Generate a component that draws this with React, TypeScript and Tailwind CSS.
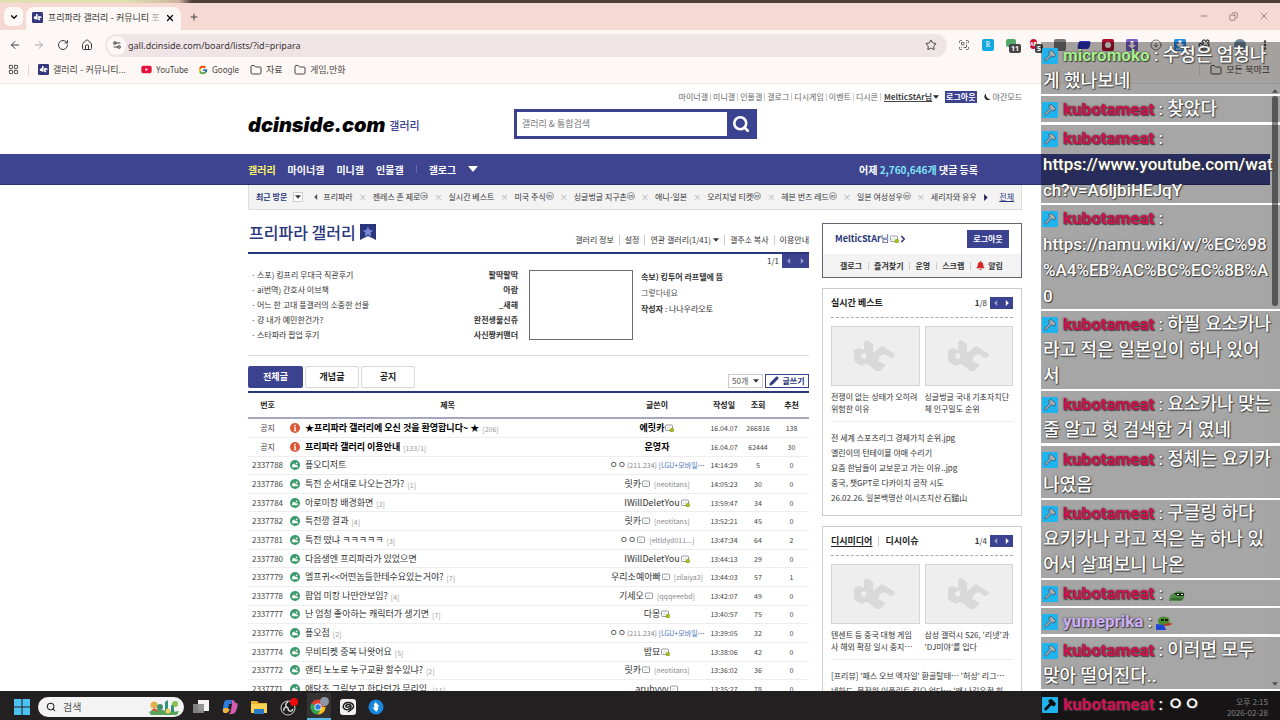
import React from 'react';
import {
  ArrowLeft,
  ArrowRight,
  ChevronDown,
  ChevronRight,
  CircleArrowDown,
  Copy,
  EllipsisVertical,
  Folder,
  House,
  LayoutGrid,
  Minus,
  Pencil,
  Plus,
  Puzzle,
  RotateCw,
  ScanQrCode,
  Search,
  Settings2,
  Star,
  X,
} from 'lucide-react';
import { FcGoogle } from 'react-icons/fc';
import { FaBell, FaYoutube } from 'react-icons/fa';

type Post = {
  id: string;
  title: string;
  replies?: string;
  writer: string;
  uid?: string;
  ip?: boolean;
  badge?: 'fixed' | 'semi';
  date: string;
  views: string;
  likes: string;
  notice?: boolean;
};

const posts: Post[] = [
  { id: '공지', title: '★프리파라 갤러리에 오신 것을 환영합니다~ ★', replies: '206', writer: '에릿카', badge: 'fixed', date: '16.04.07', views: '266816', likes: '138', notice: true },
  { id: '공지', title: '프리파라 갤러리 이용안내', replies: '133/1', writer: '운영자', date: '16.04.07', views: '62444', likes: '30', notice: true },
  { id: '2337788', title: '픞오디저트', writer: 'ㅇㅇ', ip: true, date: '14:14:29', views: '5', likes: '0' },
  { id: '2337786', title: '특전 순서대로 나오는건가?', replies: '1', writer: '릿카', uid: 'neotitans', badge: 'semi', date: '14:05:23', views: '30', likes: '0' },
  { id: '2337784', title: '아로미캉 배경화면', replies: '2', writer: 'IWillDeletYou', badge: 'fixed', date: '13:59:47', views: '34', likes: '0' },
  { id: '2337782', title: '특전깡 결과', replies: '4', writer: '릿카', uid: 'neotitans', badge: 'semi', date: '13:52:21', views: '45', likes: '0' },
  { id: '2337781', title: '특전 떴냐 ㅋㅋㅋㅋㅋ', replies: '3', writer: 'ㅇㅇ', uid: 'eltldyd011...', badge: 'semi', date: '13:47:34', views: '64', likes: '2' },
  { id: '2337780', title: '다음생엔 프리파라가 있었으면', writer: 'IWillDeletYou', badge: 'fixed', date: '13:44:13', views: '29', likes: '0' },
  { id: '2337779', title: '엘프귀<<어떤놈들한테수요있는거야?', replies: '7', writer: '우리소예아빠', uid: 'zilaiya3', badge: 'semi', date: '13:44:03', views: '57', likes: '1' },
  { id: '2337778', title: '팝업 미캉 나만안보임?', replies: '4', writer: '기세오', uid: 'qqqeeebd', badge: 'semi', date: '13:42:07', views: '49', likes: '0' },
  { id: '2337777', title: '난 엄청 좋아하는 캐릭터가 생기면', replies: '7', writer: '다몽', badge: 'fixed', date: '13:40:57', views: '75', likes: '0' },
  { id: '2337776', title: '픞오점', replies: '2', writer: 'ㅇㅇ', ip: true, date: '13:39:05', views: '32', likes: '0' },
  { id: '2337774', title: '무비티켓 중복 나왓어요', replies: '5', writer: '밤묘', badge: 'fixed', date: '13:38:06', views: '42', likes: '0' },
  { id: '2337772', title: '랜티 노노로 누구교환 할수있냐?', replies: '2', writer: '릿카', uid: 'neotitans', badge: 'semi', date: '13:36:02', views: '36', likes: '0' },
  { id: '2337771', title: '애당초 그림보고 한다던가 무리임.', replies: '11', writer: 'aruhyyy', badge: 'semi', date: '13:35:27', views: '78', likes: '0' },
];

const recent = [
  { name: '프리파라' },
  { name: '젠레스 존 제로', minor: true },
  { name: '실시간 베스트' },
  { name: '미국 주식', minor: true },
  { name: '싱글벙글 지구촌', minor: true },
  { name: '애니-일본' },
  { name: '오리지널 티켓', minor: true },
  { name: '헤븐 번즈 레드', minor: true },
  { name: '일본 여성성우', minor: true },
  { name: '세리자와 유우' },
];

const hotPosts = [
  ['스포) 킹프리 무대극 직관후기', '팔딱팔딱'],
  ['ai번역) 간호사 이브책', '아람'],
  ['어느 한 고대 픞갤러의 소중한 선물', '_새해'],
  ['걍 내가 예민한건가?', '완전생물신쥬'],
  ['스타파라 팝업 후기', '사신짱커맨더'],
];

type Chat = { user: string; color: string; lines: React.ReactNode[] };

const RED = 'text-[#cf1150]';

const chats: Chat[] = [
  { user: 'micromoko', color: 'text-[#a5f08a]', lines: ['수정은 엄청나', '게 했나보네'] },
  { user: 'kubotameat', color: RED, lines: ['찾았다'] },
  { user: 'kubotameat', color: RED, lines: ['', 'https://www.youtube.com/wat', 'ch?v=A6ljbiHEJqY'] },
  { user: 'kubotameat', color: RED, lines: ['', 'https://namu.wiki/w/%EC%98', '%A4%EB%AC%BC%EC%8B%A', '0'] },
  { user: 'kubotameat', color: RED, lines: ['하필 요소카나', '라고 적은 일본인이 하나 있어', '서'] },
  { user: 'kubotameat', color: RED, lines: ['요소카나 맞는', '줄 알고 헛 검색한 거 였네'] },
  { user: 'kubotameat', color: RED, lines: ['정체는 요키카', '나였음'] },
  { user: 'kubotameat', color: RED, lines: ['구글링 하다', '요키카나 라고 적은 놈 하나 있', '어서 살펴보니 나온'] },
  { user: 'kubotameat', color: RED, lines: [<FrogFlat key="e" />] },
  { user: 'yumeprika', color: 'text-[#cdb0f7]', lines: [<FrogBlue key="e" />] },
  { user: 'kubotameat', color: RED, lines: ['이러면 모두', '맞아 떨어진다..'] },
  { user: 'kubotameat', color: RED, lines: ['ㅇㅇ'] },
];

function FrogFlat() {
  return (
    <svg viewBox="0 0 16 12" className="ml-0.5 inline-block h-3 w-4 align-[-3px]">
      <path d="M0 11 C0 6 3 3 6 3 C8 0 14 1 15 4 C16 7 14 11 12 11Z" fill="#4d8b45" />
      <path d="M5 3h10v3H9L7 5Z" fill="#16251a" />
      <path d="M8 4h2v1H8zM12 4h2v1h-2z" fill="#dfe9dc" />
      <path d="M2 9h11" stroke="#274d24" strokeWidth="1" />
    </svg>
  );
}

function FrogBlue() {
  return (
    <svg viewBox="0 0 16 14" className="inline-block h-3.5 w-4 align-[-3px]">
      <path d="M2 4 C3 0 8 0 10 1 C14 1 14 5 13 8 L9 10 H3Z" fill="#4c8a2f" />
      <path d="M0 8 L8 9 L10 14 H0Z" fill="#1d45d8" />
      <path d="M5 3h3v2H5zM9 3h3v2H9z" fill="#17240f" />
      <path d="M8 8 L16 7 L15 9 L9 10Z" fill="#c62e22" />
    </svg>
  );
}

const DcFavicon = () => (
  <svg viewBox="0 0 12 12" className="size-[11px] shrink-0">
    <rect width="12" height="12" rx="1.5" fill="#35367f" />
    <path d="M2 5.2 4.4 4.4V2.3h1.7v6.2L3.4 8 2 7Z M6.6 5 8.6 4l2.2 1.6-.6 1L8.4 6v1.5l1 .6-1.2 1.3-1.6-1.2Z" fill="#fff" />
  </svg>
);

const DcPlaceholder = () => (
  <svg viewBox="0 0 42 32" className="h-8 w-[42px]">
    <path
      fill="#d9d9d9"
      fillRule="evenodd"
      d="M0 10 L5 8 L10 10 L10 2 L13 0 L19 4 L19 13 L28 6 L41 14 L40 17 L36 18 L31 14 L26 16 L24 21 L32 25 L26 31 L22 31 L15 25 L11 24 L8 26 L2 23 L0 20 Z M7 14 L8 19 L12 18 L12 13 Z"
    />
  </svg>
);

const NickBadge = ({ kind }: { kind: 'fixed' | 'semi' }) => (
  <svg viewBox="0 0 9 8" className="h-2 w-[9px] shrink-0">
    <rect x="0.5" y="1" width="7" height="5.5" rx="0.8" fill="#fff" stroke="#8f8f8f" strokeWidth="0.9" />
    <path d="M2 5 5 3" stroke="#bbb" strokeWidth="0.7" />
    {kind === 'fixed' && <rect x="5" y="4.5" width="3.6" height="3.2" rx="1" fill="#a9c410" stroke="#6f8010" strokeWidth="0.5" />}
  </svg>
);

const PostIcon = ({ notice }: { notice?: boolean }) =>
  notice ? (
    <svg viewBox="0 0 10 10" className="size-2.5 shrink-0">
      <circle cx="5" cy="5" r="5" fill="#dc5738" />
      <circle cx="5" cy="2.6" r="0.9" fill="#fff" />
      <path d="M3.9 4.2H5.8V7.4H6.4V8.2H3.8V7.4H4.4V5H3.9Z" fill="#fff" />
    </svg>
  ) : (
    <svg viewBox="0 0 10 10" className="size-2.5 shrink-0">
      <circle cx="5" cy="5" r="5" fill="#3b9a6a" />
      <path d="M2 7.2 L2.4 4.6 L4.2 3.4 L5.4 5 L7.6 5.4 L8 7.2Z" fill="#fff" />
      <circle cx="6.6" cy="3.4" r="0.9" fill="#fff" />
    </svg>
  );

const Tri = ({ dir, className }: { dir: 'left' | 'right' | 'down'; className?: string }) => {
  const d = { left: 'M7 0V10L2 5Z', right: 'M3 0V10L8 5Z', down: 'M0 2H10L5 8Z' }[dir];
  return (
    <svg viewBox="0 0 10 10" className={className}>
      <path d={d} fill="currentColor" />
    </svg>
  );
};

const Pager = ({ page, total, dim }: { page: string; total: string; dim?: boolean }) => (
  <div className="flex items-center gap-[3px] text-[8px] text-[#333]">
    <span>
      <span className={dim ? '' : 'font-bold'}>{page}</span>/{total}
    </span>
    <div className={`flex bg-[#3b4290] ${dim ? 'h-[14px] w-[27px]' : 'h-3 w-[23px]'}`}>
      <button aria-label="이전" className="flex flex-1 items-center justify-center text-[#9a9fd0]">
        <Tri dir="left" className="size-1.5" />
      </button>
      <button aria-label="다음" className={`flex flex-1 items-center justify-center ${dim ? 'text-[#9a9fd0]' : 'text-white'}`}>
        <Tri dir="right" className="size-1.5" />
      </button>
    </div>
  </div>
);

const HammerBadge = ({ dark }: { dark?: boolean }) => (
  <svg viewBox="0 0 16 16" className="mr-[5px] -ml-px inline-block size-4 align-[-3px]">
    <rect width="16" height="16" rx="1" fill="#1fb4ee" />
    <path
      d="M6.8 3.4 L9.4 2.4 L13.6 6.4 L12.4 9 L10.6 8.6 L9.2 7.9 L4 13.4 L2.4 12 L7.6 6.6Z"
      fill={dark ? '#0a0a0a' : '#a9adb0'}
      stroke={dark ? '#0a0a0a' : '#33607a'}
      strokeWidth="0.9"
    />
  </svg>
);

function BrowserChrome() {
  return (
    <div className="shrink-0 font-['Noto_Sans','Noto_Sans_CJK_KR',sans-serif]">
      <div className="h-[3px] bg-linear-to-r from-[#dfe0b0] from-10% via-[#cdb39f] via-14% to-[#4c4038] to-15%" />
      <div className="flex h-[27px] items-end bg-[#f7d9d4] pl-1">
        <button aria-label="탭 검색" className="mb-1 flex h-[19px] w-[19px] items-center justify-center rounded-md bg-[#fdf9f6]">
          <ChevronDown className="size-2.5" strokeWidth={3} />
        </button>
        <div className="ml-[3px] flex h-[23px] w-[155px] items-center rounded-t-lg bg-[#fdf8f5] pr-1.5 pb-1 pl-1.5 pt-0.5">
          <DcFavicon />
          <span className="ml-[5px] flex-1 overflow-hidden text-[9px] leading-3 whitespace-nowrap text-[#333]">
            프리파라 갤러리 - 커뮤니티 <span className="text-[#aaa]">포</span>
          </span>
          <button aria-label="탭 닫기">
            <X className="size-2.5" strokeWidth={3} />
          </button>
        </div>
        <button aria-label="새 탭" className="mb-2 ml-2">
          <Plus className="size-2.5 text-[#444]" strokeWidth={2.5} />
        </button>
        <div className="mr-2.5 mb-2 ml-auto flex items-center gap-5 text-[#7d6a68]">
          <Minus className="size-2.5" />
          <Copy className="size-[9px] -scale-x-100" />
          <X className="size-3" strokeWidth={1.5} />
        </div>
      </div>
      <div className="flex h-[30px] items-center bg-[#fdf8f5] pl-2 text-[#3c3c3c]">
        <div className="flex gap-3 pl-px">
          <ArrowLeft className="size-3" />
          <ArrowRight className="size-3 text-[#aaa]" />
          <RotateCw className="size-3" />
          <House className="size-3" />
        </div>
        <div className="ml-3 flex h-[23px] flex-1 items-center rounded-full bg-[#f0e5e6] pr-2.5 pl-0.5">
          <span className="flex size-[19px] items-center justify-center rounded-full bg-[#fdf8f5]">
            <Settings2 className="size-2.5" strokeWidth={2.5} />
          </span>
          <input
            aria-label="주소"
            defaultValue="gall.dcinside.com/board/lists/?id=pripara"
            className="ml-0.5 h-4 flex-1 bg-transparent text-[9px] text-[#3a3536] outline-none"
          />
          <Star className="size-3" />
        </div>
        <div className="flex items-center gap-3 pr-[9px] pl-[11px]">
          <ScanQrCode className="size-3 text-[#666]" />
          <span className="flex size-3 items-center justify-center rounded-xs bg-[#12a9e0] font-serif text-[8px] text-white">R</span>
          <span className="relative size-3">
            <span className="absolute top-0 left-0 h-2 w-2.5 rounded-xs bg-[#55a86a]" />
            <span className="absolute top-[5px] left-[3px] rounded-xs bg-[#444] px-0.5 text-[7px] leading-[9px] font-bold text-white">11</span>
          </span>
          <span className="relative size-3">
            <span className="absolute top-0 left-0 rounded-full bg-[#cc1030] text-[5px] leading-[10px] font-bold text-white">AB</span>
            <span className="absolute top-[5px] left-[5px] rounded-xs bg-[#444] px-0.5 text-[7px] leading-[9px] font-bold text-white">5</span>
          </span>
          <span className="size-3 rounded-xs bg-[#777]" />
          <span className="h-2 w-3 -skew-x-12 rounded-xs bg-[#3030c0]" />
          <span className="flex size-3 items-center justify-center rounded-xs bg-[#b01030]">
            <span className="size-1.5 rounded-full bg-white" />
          </span>
          <svg viewBox="0 0 12 12" className="size-3">
            <rect width="12" height="12" rx="1.5" fill="#7a5fc0" />
            <path d="M4.500 2h3v4H10L6 10 2 6h2.500Z" fill="#fff" />
          </svg>
          <CircleArrowDown className="size-3 text-[#777]" />
          <svg viewBox="0 0 12 12" className="size-3">
            <rect width="12" height="12" rx="1.5" fill="#2a8ae0" />
            <path d="M4.500 1.500h3v3.500H10L6 9 2 5h2.500ZM2 9.500h8v1H2Z" fill="#fff" />
          </svg>
          <Puzzle className="size-3" strokeWidth={2.5} />
          <span className="mr-px ml-3 size-3 rounded-full bg-[#70899c]" />
          <EllipsisVertical className="size-3" strokeWidth={3} />
        </div>
      </div>
      <div className="flex h-6 items-center border-b border-[#ece6e3] bg-[#fdf8f5] pr-2.5 pb-1 pl-2 text-[8px] text-[#4a4444]">
        <LayoutGrid className="size-[11px]" />
        <span className="mx-[9px] h-2.5 w-px bg-[#f0cdc8]" />
        <a href="#" className="flex w-[103px] items-center gap-1 text-[9px]">
          <DcFavicon />
          갤러리 - 커뮤니티...
        </a>
        <a href="#" className="flex w-[57px] items-center gap-1">
          <FaYoutube className="size-[11px] text-[#e5103c]" />
          YouTube
        </a>
        <a href="#" className="flex w-[52px] items-center gap-1">
          <FcGoogle className="size-2.5" />
          Google
        </a>
        <a href="#" className="flex w-11 items-center gap-1 text-[9px]">
          <Folder className="size-3" />
          자료
        </a>
        <a href="#" className="flex items-center gap-1 text-[9px]">
          <Folder className="size-3" />
          게임,만화
        </a>
        <a href="#" className="ml-auto flex items-center gap-1 border-l border-[#ddd] pl-2.5 text-[9px]">
          <Folder className="size-3" />
          모든 북마크
        </a>
      </div>
    </div>
  );
}

function SiteHeader() {
  const links = ['마이너갤', '미니갤', '인물갤', '갤로그', '디시게임', '이벤트', '디시콘'];
  return (
    <header>
      <div className="mx-auto max-w-[774px] pb-[15px]">
        <div className="flex h-[25px] items-center justify-end text-[8px] text-[#666]">
          {links.map((l) => (
            <a key={l} href="#" className="flex items-center whitespace-nowrap after:mx-0.5 after:h-2 after:w-px after:bg-[#ccc]">
              {l}
            </a>
          ))}
          <a href="#" className="ml-px flex items-center font-bold text-[#444]">
            <span className="underline">MelticStAr님</span>
            <Tri dir="down" className="ml-px size-1.5 text-[#222]" />
          </a>
          <button className="mx-1.5 h-3 bg-[#3b4290] px-px leading-3 font-bold text-white">로그아웃</button>
          <a href="#" className="flex items-center gap-0.5">
            <svg viewBox="0 0 10 10" className="size-2">
              <path d="M4 0.500A4.500 4.500 0 1 0 9.500 7.500A5.200 5.200 0 0 1 4 0.500Z" fill="#222" />
            </svg>
            야간모드
          </a>
        </div>
        <div className="flex h-[30px] items-center">
          <h1 className="flex w-[266px] items-center gap-1 pt-0.5">
            <a href="#" className="font-['Inter'] text-[20px] leading-6 font-black text-black italic">
              dcinside.com
            </a>
            <a href="#" className="text-[11px] font-medium text-[#3b4290]">
              갤러리
            </a>
          </h1>
          <form className="flex h-[30px] w-[243px] border-[3px] border-[#3b4290]" onSubmit={(e) => e.preventDefault()}>
            <input
              aria-label="검색"
              placeholder="갤러리 & 통합검색"
              className="min-w-0 flex-1 bg-white pl-[5px] text-[9px] outline-none placeholder:text-[#777]"
            />
            <button aria-label="검색" className="flex w-[27px] items-center justify-center bg-[#3b4290]">
              <Search className="size-[18px] text-white" strokeWidth={3.5} />
            </button>
          </form>
        </div>
      </div>
      <nav className="h-[31px] border-b border-[#29306e] bg-[#3e4490]">
        <div className="mx-auto flex h-full max-w-[774px] items-center gap-3 text-[10px] font-bold text-white">
          <a href="#" className="text-[#fff36b]">갤러리</a>
          <a href="#">마이너갤</a>
          <a href="#">미니갤</a>
          <a href="#">인물갤</a>
          <span className="h-2 w-px bg-[#6268a8]" />
          <a href="#">갤로그</a>
          <button aria-label="더보기">
            <Tri dir="down" className="size-2.5" />
          </button>
          <span className="mr-11 ml-auto">
            어제 <span className="text-[#7fe3f7]">2,760,646개</span> 댓글 등록
          </span>
        </div>
      </nav>
      <div className="mx-auto flex h-[25px] max-w-[774px] items-center border border-t-0 border-[#ddd] bg-[#f3f3f3] px-[7px] text-[8px] text-[#333]">
        <span className="shrink-0 font-bold text-[#29367c]">최근 방문</span>
        <button aria-label="최근 방문 열기" className="ml-1.5 flex size-2.5 shrink-0 items-center justify-center border border-[#ccc] bg-white">
          <Tri dir="down" className="size-1.5" />
        </button>
        <Tri dir="left" className="ml-2.5 size-1.5 shrink-0 text-[#555]" />
        <ul className="ml-1 flex flex-1 overflow-hidden">
          {recent.map((g) => (
            <li key={g.name} className="flex shrink-0 items-center">
              <a href="#">{g.name}</a>
              {g.minor && (
                <span className="mb-[3px] flex size-2 items-center justify-center rounded-full border border-[#999] text-[5px] leading-none">
                  m
                </span>
              )}
              <span className="mx-1.5 text-[8px] text-[#aaa]">×</span>
            </li>
          ))}
        </ul>
        <Tri dir="right" className="mr-2.5 ml-1.5 size-[7px] shrink-0 text-[#1a2160]" />
        <a href="#" className="shrink-0 text-[#29367c] underline">
          전체
        </a>
      </div>
    </header>
  );
}

function Writer({ post }: { post: Post }) {
  return (
    <span className="flex h-3 items-center justify-center gap-px whitespace-nowrap">
      <span className={post.notice ? 'font-bold text-black' : ''}>{post.writer}</span>
      {post.ip && (
        <span className="text-[7px] text-[#888]">
          (211.234) <span className="text-[#4a76c0]">[LGU+모바일</span>
          <span className="text-[#333]">…</span>
        </span>
      )}
      {post.badge && <NickBadge kind={post.badge} />}
      {post.uid && <span className="ml-0.5 text-[7px] text-[#888]">[{post.uid}]</span>}
    </span>
  );
}

function Board() {
  return (
    <main className="min-w-0 flex-1">
      <div className="flex h-11 items-end justify-between border-b-2 border-[#29367c] pb-[7px]">
        <h2 className="flex items-center gap-1 pl-px text-[16px] leading-[26px] font-medium text-[#29367c]">
          프리파라 갤러리
          <svg viewBox="0 0 16 16" className="size-4">
            <path d="M0 0H16V16L8 12 0 16Z" fill="#29367c" />
            <path d="M8 2.5 9.6 6 13.2 6.4 10.5 8.8 11.3 12.4 8 10.5 4.7 12.4 5.5 8.8 2.8 6.4 6.4 6Z" fill="#7a86d8" />
          </svg>
        </h2>
        <div className="flex divide-x divide-[#ccc] text-[8px] leading-2.5 text-[#333]">
          <a href="#" className="pr-[5px]">갤러리 정보</a>
          <a href="#" className="px-[5px]">설정</a>
          <a href="#" className="flex items-center px-[5px]">
            연관 갤러리(1/41)
            <Tri dir="down" className="ml-0.5 size-1.5" />
          </a>
          <a href="#" className="px-[5px]">갤주소 복사</a>
          <a href="#" className="pl-[5px]">이용안내</a>
        </div>
      </div>

      <div className="flex h-[102px] border-b border-[#ddd] text-[8px] text-[#333]">
        <ul className="w-[270px] pt-[13px]">
          {hotPosts.map(([title, writer]) => (
            <li key={title} className="flex justify-between leading-[15px]">
              <a href="#" className="flex">
                <span className="w-[9px] pl-[3px]">·</span>
                {title}
              </a>
              <span className="font-bold">{writer}</span>
            </li>
          ))}
        </ul>
        <div className="mt-4 ml-[11px] h-[70px] w-[104px] border border-[#6b6b78]" />
        <div className="ml-2 flex flex-col gap-1 pt-[17px]">
          <b>속보) 킹투어 라프텔에 뜸</b>
          <span className="text-[#555]">그렇다네요</span>
          <span>
            <b>작성자</b> : 나나우라오토
          </span>
        </div>
        <div className="ml-auto">
          <Pager page="1" total="1" dim />
        </div>
      </div>

      <div className="flex items-end justify-between border-b-2 border-[#29367c] pt-2.5 pb-[3px]">
        <div className="flex gap-0.5 text-[9px] font-bold text-[#222]">
          <button className="h-[22px] w-[55px] rounded-xs bg-[#3b4290] text-white">전체글</button>
          <button className="h-[22px] w-[54px] rounded-xs border border-[#d5d8dc]">개념글</button>
          <button className="h-[22px] w-[54px] rounded-xs border border-[#d5d8dc]">공지</button>
        </div>
        <div className="flex gap-0.5 text-[8px]">
          <div className="relative">
            <select aria-label="목록 개수" className="h-[14px] w-[35px] appearance-none rounded-none border border-[#ccc] bg-white pl-[3px] leading-3 text-[#555]">
              <option>50개</option>
              <option>100개</option>
            </select>
            <Tri dir="down" className="pointer-events-none absolute top-1 right-1 size-1.5 text-[#333]" />
          </div>
          <button className="flex h-[14px] w-11 items-center justify-center gap-[3px] border border-[#3b4290] font-bold text-[#29367c]">
            <Pencil className="size-2.5 fill-[#29367c]" />
            글쓰기
          </button>
        </div>
      </div>

      <table className="h-[306px] w-full table-fixed border-collapse text-center text-[8px] text-[#444]">
        <colgroup>
          <col className="w-[39px]" />
          <col />
          <col className="w-[98px]" />
          <col className="w-9" />
          <col className="w-8" />
          <col className="w-[35px]" />
        </colgroup>
        <thead>
          <tr className="h-[25px] border-b-2 border-[#a5a6c0] text-[#222]">
            {['번호', '제목', '글쓴이', '작성일', '조회', '추천'].map((h) => (
              <th key={h} className="p-0 font-bold">
                {h}
              </th>
            ))}
          </tr>
        </thead>
        <tbody>
          {posts.map((p, i) => (
            <tr key={i} className="border-b border-[#eee] leading-3">
              <td className="p-0 text-[8px]">{p.id}</td>
              <td className="p-0">
                <div className="flex h-3 items-center pl-[3px] text-[9px] text-[#333]">
                  <PostIcon notice={p.notice} />
                  <a href="#" className={`ml-[5px] whitespace-nowrap ${p.notice ? 'font-bold text-black' : ''}`}>
                    {p.title}
                  </a>
                  {p.replies && <span className="ml-[3px] pt-0.5 text-[7px] text-[#999]">[{p.replies}]</span>}
                </div>
              </td>
              <td className="overflow-hidden p-0 text-[9px] text-[#333]">
                <Writer post={p} />
              </td>
              <td className="p-0 text-[7px]">{p.date}</td>
              <td className="p-0 text-[7px]">{p.views}</td>
              <td className="p-0 text-[7px]">{p.likes}</td>
            </tr>
          ))}
        </tbody>
      </table>
    </main>
  );
}

function SideBox({ title, page, total, cards, items }: { title: React.ReactNode; page: string; total: string; cards: string[][]; items: string[] }) {
  return (
    <section className="mt-2.5 border border-[#ccc] px-2 pb-2.5 text-[8px] text-[#333]">
      <div className="flex h-[29px] items-center justify-between border-b border-dashed border-[#aaa]">
        <h3 className="flex items-center text-[9px] font-bold text-[#222]">{title}</h3>
        <Pager page={page} total={total} />
      </div>
      <div className="grid grid-cols-2 gap-[5px] border-b border-[#eee] pt-2 pb-1.5">
        {cards.map((lines) => (
          <a key={lines[0]} href="#" className="block leading-3 whitespace-nowrap">
            <span className="mb-[5px] flex h-[60px] items-center justify-center border border-[#d5d5d5] bg-[#eee]">
              <DcPlaceholder />
            </span>
            {lines.map((l) => (
              <span key={l} className="block">
                {l}
              </span>
            ))}
          </a>
        ))}
      </div>
      <ul className="pt-2 leading-[15px] whitespace-nowrap">
        {items.map((t) => (
          <li key={t}>
            <a href="#">{t}</a>
          </li>
        ))}
      </ul>
    </section>
  );
}

function Sidebar() {
  return (
    <aside className="w-[200px] shrink-0 pt-[13px]">
      <section className="border border-[#62646f]">
        <div className="flex h-[30px] items-center justify-between px-3">
          <a href="#" className="flex items-center gap-px text-[9px] text-[#29367c]">
            <span>
              <b>MelticStAr</b>님
            </span>
            <NickBadge kind="fixed" />
            <ChevronRight className="-ml-0.5 size-2.5" strokeWidth={4} />
          </a>
          <button className="h-[18px] w-[42px] bg-[#3b4290] text-[8px] font-bold text-white">로그아웃</button>
        </div>
        <div className="flex h-[23px] items-center justify-between bg-[#f3f3f3] pr-[18px] pl-[17px] text-[8px] font-bold text-[#333]">
          <a href="#">갤로그</a>
          <span className="h-2 w-px bg-[#ccc]" />
          <a href="#">즐겨찾기</a>
          <span className="h-2 w-px bg-[#ccc]" />
          <a href="#">운영</a>
          <span className="h-2 w-px bg-[#ccc]" />
          <a href="#">스크랩</a>
          <span className="h-2 w-px bg-[#ccc]" />
          <a href="#" className="flex items-center gap-[3px]">
            <FaBell className="size-[9px] text-[#d62a2a]" />
            알림
          </a>
        </div>
      </section>
      <SideBox
        title="실시간 베스트"
        page="1"
        total="8"
        cards={[
          ['전쟁이 없는 상태가 오히려', '위험한 이유'],
          ['싱글벙글 국내 기초자치단', '체 인구밀도 순위'],
        ]}
        items={[
          '전 세계 스포츠리그 경제가치 순위.jpg',
          '옐린이의 턴테이블 야매 수리기',
          '요즘 한남들이 교보문고 가는 이유..jpg',
          '중국, 챗GPT로 다카이치 공작 시도',
          '26.02.26. 일본백명산 이시즈치산 石鎚山',
        ]}
      />
      <SideBox
        title={
          <>
            <span className="underline underline-offset-2">디시미디어</span>
            <span className="mx-1.5 h-2.5 w-px bg-[#ccc]" />
            <span>디시이슈</span>
          </>
        }
        page="1"
        total="4"
        cards={[
          ['텐센트 등 중국 대형 게임', '사 해외 확장 일시 중지…'],
          ["삼성 갤럭시 S26, '리넷'과", "'DJ미야'를 입다"],
        ]}
        items={["[프리뷰] '패스 오브 엑자일' 환골탈태… '허상' 리그…", "넷하드, 불장원 이플린트 킬으 얻다… '왜 나김우정 회"]}
      />
    </aside>
  );
}

function Taskbar() {
  return (
    <footer className="flex h-[29px] shrink-0 items-center bg-[#222021] pt-0.5 pl-[14px]">
      <svg viewBox="0 0 16 16" className="size-4">
        <path d="M0 0h7.5v7.5H0zM8.5 0H16v7.5H8.5zM0 8.5h7.5V16H0zM8.5 8.5H16V16H8.5z" fill="#4cc2f1" />
      </svg>
      <label className="ml-2 flex h-5 w-[146px] items-center rounded-full bg-[#f3f3f3] pr-1 pl-2">
        <Search className="size-2.5 text-[#222]" strokeWidth={2.5} />
        <input aria-label="검색" placeholder="검색" className="ml-[7px] min-w-0 flex-1 bg-transparent text-[10px] placeholder:text-[#555]" />
        <svg viewBox="0 0 32 18" className="h-[18px] w-8">
          <path d="M1 14 Q8 9 15 12 T31 13 L29 17 H3Z" fill="#5ba55a" />
          <circle cx="6" cy="7" r="3.5" fill="#e2b04a" />
          <circle cx="12" cy="9" r="3" fill="#3f8f6f" />
          <path d="M17 14V4l3-2v12zM23 14V7h3v7z" fill="#2f8f83" />
          <circle cx="27" cy="6" r="3" fill="#8cc152" />
          <path d="M3 12l4-2 3 4z" fill="#d9573f" />
          <circle cx="20" cy="13" r="2.5" fill="#f1cf63" />
        </svg>
      </label>
      <div className="ml-2 flex items-center gap-3">
        <svg viewBox="0 0 18 16" className="h-4 w-[18px]">
          <rect x="6" y="1" width="11" height="11" fill="#f4f4f4" />
          <rect x="1" y="5" width="11" height="9" fill="#8c8c8c" opacity="0.9" />
        </svg>
        <svg viewBox="0 0 16 16" className="size-4">
          <path d="M5 1h5l-2 9-2 3H3c-2 0-3-1-2-4l1-5C2.500 2 3 1 5 1Z" fill="#2f7de0" />
          <path d="M10 1c2 0 3 1 3 3h1c2 0 2 2 1 5l-1 3c-1 2-2 3-4 3H6c2 0 2-1 3-4Z" fill="#d65bb0" />
          <path d="M2 9h6l-1 3-2 2H3c-2 0-3-2-1-5Z" fill="#f2b53b" />
          <path d="M7 5h3l-1 5H6Z" fill="#222021" />
        </svg>
        <svg viewBox="0 0 18 16" className="h-4 w-[18px]">
          <path d="M1 2h6l2 2h8v10H1Z" fill="#e9b233" />
          <path d="M1 5h16v9H1Z" fill="#fbd152" />
          <path d="M4 10h10v5H4Z" fill="#2379c6" />
        </svg>
        <svg viewBox="0 0 18 18" className="size-[18px]">
          <circle cx="8" cy="10" r="7" fill="#1c1c1e" stroke="#d5d5d5" />
          <path d="M8 4c-3 1-3 5 0 6M13 11c-1 3-5 3-5-1M4 13c-1-3 2-5 4-3" stroke="#d5d5d5" strokeWidth="1.500" fill="none" />
          <circle cx="14" cy="4" r="4" fill="#f00a0a" />
        </svg>
        <span className="-mx-[3px] flex h-[27px] w-6 items-center justify-center border-b-2 border-[#5bb8ea] bg-[#343233]">
          <svg viewBox="0 0 20 18" className="h-[18px] w-5">
            <circle cx="9" cy="10" r="7.500" fill="#e33b2e" />
            <path d="M9 10 2.500 6.200A7.500 7.500 0 0 0 9 17.500l3.500-6Z" fill="#2da44e" />
            <path d="M9 10h7.500A7.500 7.500 0 0 1 9 17.500l3.300-6Z" fill="#fbc116" />
            <circle cx="9" cy="10" r="3.600" fill="#fff" />
            <circle cx="9" cy="10" r="2.800" fill="#2b7de9" />
            <circle cx="15.500" cy="4.500" r="4.500" fill="#8b98a3" />
          </svg>
        </span>
        <svg viewBox="0 0 16 16" className="size-4">
          <rect width="16" height="16" rx="3" fill="#f2f2f2" />
          <path d="M10 7c-2 2-5 1-4-.5C7 5 11 5 11 7.500S6 12 4 9.500 4 3.500 8 3.500s6 2 5.500 4.500S9 12 8 13" fill="none" stroke="#222" strokeWidth="1.500" />
        </svg>
        <svg viewBox="0 0 16 16" className="size-4">
          <circle cx="8" cy="8" r="7.500" fill="#1787dc" />
          <path d="M7.500 3 11.500 7.500H9.300L10.500 9.500 8.300 13 4.500 8.500h2.300L5.700 6Z" fill="#fff" />
        </svg>
      </div>
      <div className="mr-3 ml-auto text-right text-[8px] leading-[11px] text-[#c4c4c4]">
        <div>오후 2:15</div>
        <div>2026-02-28</div>
      </div>
    </footer>
  );
}

const isHangul = (line: React.ReactNode) => typeof line === 'string' && /[ㄱ-힣]/.test(line);

function ChatOverlay() {
  return (
    <section
      aria-label="채팅"
      className="absolute top-[42px] right-0 bottom-0 flex w-[239px] flex-col justify-between overflow-hidden font-['Roboto','Noto_Sans_CJK_KR',sans-serif] text-[17px] leading-[26px] font-medium text-white"
    >
      {chats.map((c, i) => (
        <div key={i} className="bg-black/35 pl-0.5 whitespace-nowrap [text-shadow:0_0_2px_#333,1px_1px_1px_#444] last:pb-[3px]">
          {c.lines.map((line, n) => (
            <div key={n} className="h-[26px]">
              {n === 0 && (
                <>
                  <HammerBadge dark={i === chats.length - 1} />
                  <span className={`font-bold ${c.color}`}>{c.user}</span>
                  {' : '}
                </>
              )}
              <span className={isHangul(line) ? 'text-[18px]' : ''}>{line}</span>
            </div>
          ))}
        </div>
      ))}
    </section>
  );
}

export default function App() {
  return (
    <div className="relative flex h-screen flex-col overflow-hidden bg-white font-['Noto_Sans_CJK_KR',sans-serif]">
      <BrowserChrome />
      <div className="flex min-h-0 flex-1">
        <div className="min-w-0 flex-1 overflow-hidden">
          <SiteHeader />
          <div className="mx-auto flex max-w-[774px] gap-[13px]">
            <Board />
            <Sidebar />
          </div>
        </div>
        <div className="flex w-2.5 flex-col items-center justify-between bg-[#fcfcfc] py-1 text-[#777]">
          <Tri dir="down" className="size-1.5 rotate-180" />
          <span className="mt-0.5 h-[210px] w-1.5 rounded-full bg-[#858585]" />
          <Tri dir="down" className="mt-auto size-1.5" />
        </div>
      </div>
      <Taskbar />
      <ChatOverlay />
    </div>
  );
}
